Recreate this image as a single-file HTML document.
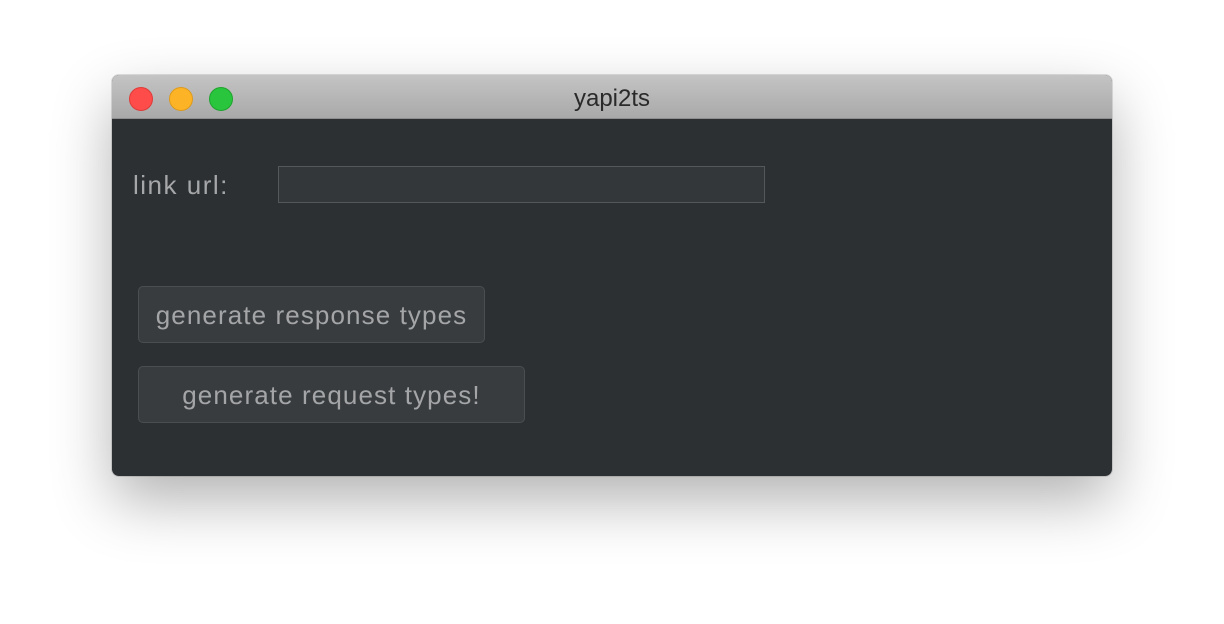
<!DOCTYPE html>
<html><head><style>
body{margin:0;width:1224px;height:624px;background:#fff;position:relative;overflow:hidden;font-family:"Liberation Sans",sans-serif}
.win{position:absolute;left:112px;top:75px;width:1000px;height:401px;border-radius:7px;background:#2d3033;box-shadow:0 25px 60px rgba(0,0,0,.3),0 0 0 1px rgba(0,0,0,.12);overflow:hidden}
.tb{position:absolute;left:0;top:0;width:1000px;height:43px;background:linear-gradient(#c4c4c4,#a9a9a9);border-bottom:1px solid #8e8e8e;text-align:center;line-height:48px;font-size:24px;color:#2a2a2a}
.d{position:absolute;top:12px;width:22px;height:22px;border-radius:50%}
.lab{position:absolute;left:21px;top:95px;font-size:26px;color:#a5a7a9;letter-spacing:1.5px}
.inp{position:absolute;left:166px;top:91px;width:485px;height:35px;background:#343739;border:1px solid #55585a}
.btn{position:absolute;left:26px;height:55px;background:#393c3f;border:1px solid #4b4e51;border-radius:5px;color:#a3a5a7;font-size:26px;text-align:center;line-height:56px;letter-spacing:1.1px}
</style></head><body>
<div class="win">
<div class="tb">yapi2ts
<div class="d" style="left:17px;background:#fd4c4a;border:1px solid #de3b39"></div>
<div class="d" style="left:57px;background:#fdb326;border:1px solid #dd9a1c"></div>
<div class="d" style="left:97px;background:#29c53d;border:1px solid #1ea42e"></div>
</div>
<div class="lab">link url:</div>
<div class="inp"></div>
<div class="btn" style="top:211px;width:345px">generate response types</div>
<div class="btn" style="top:291px;width:385px">generate request types!</div>
</div>
</body></html>
